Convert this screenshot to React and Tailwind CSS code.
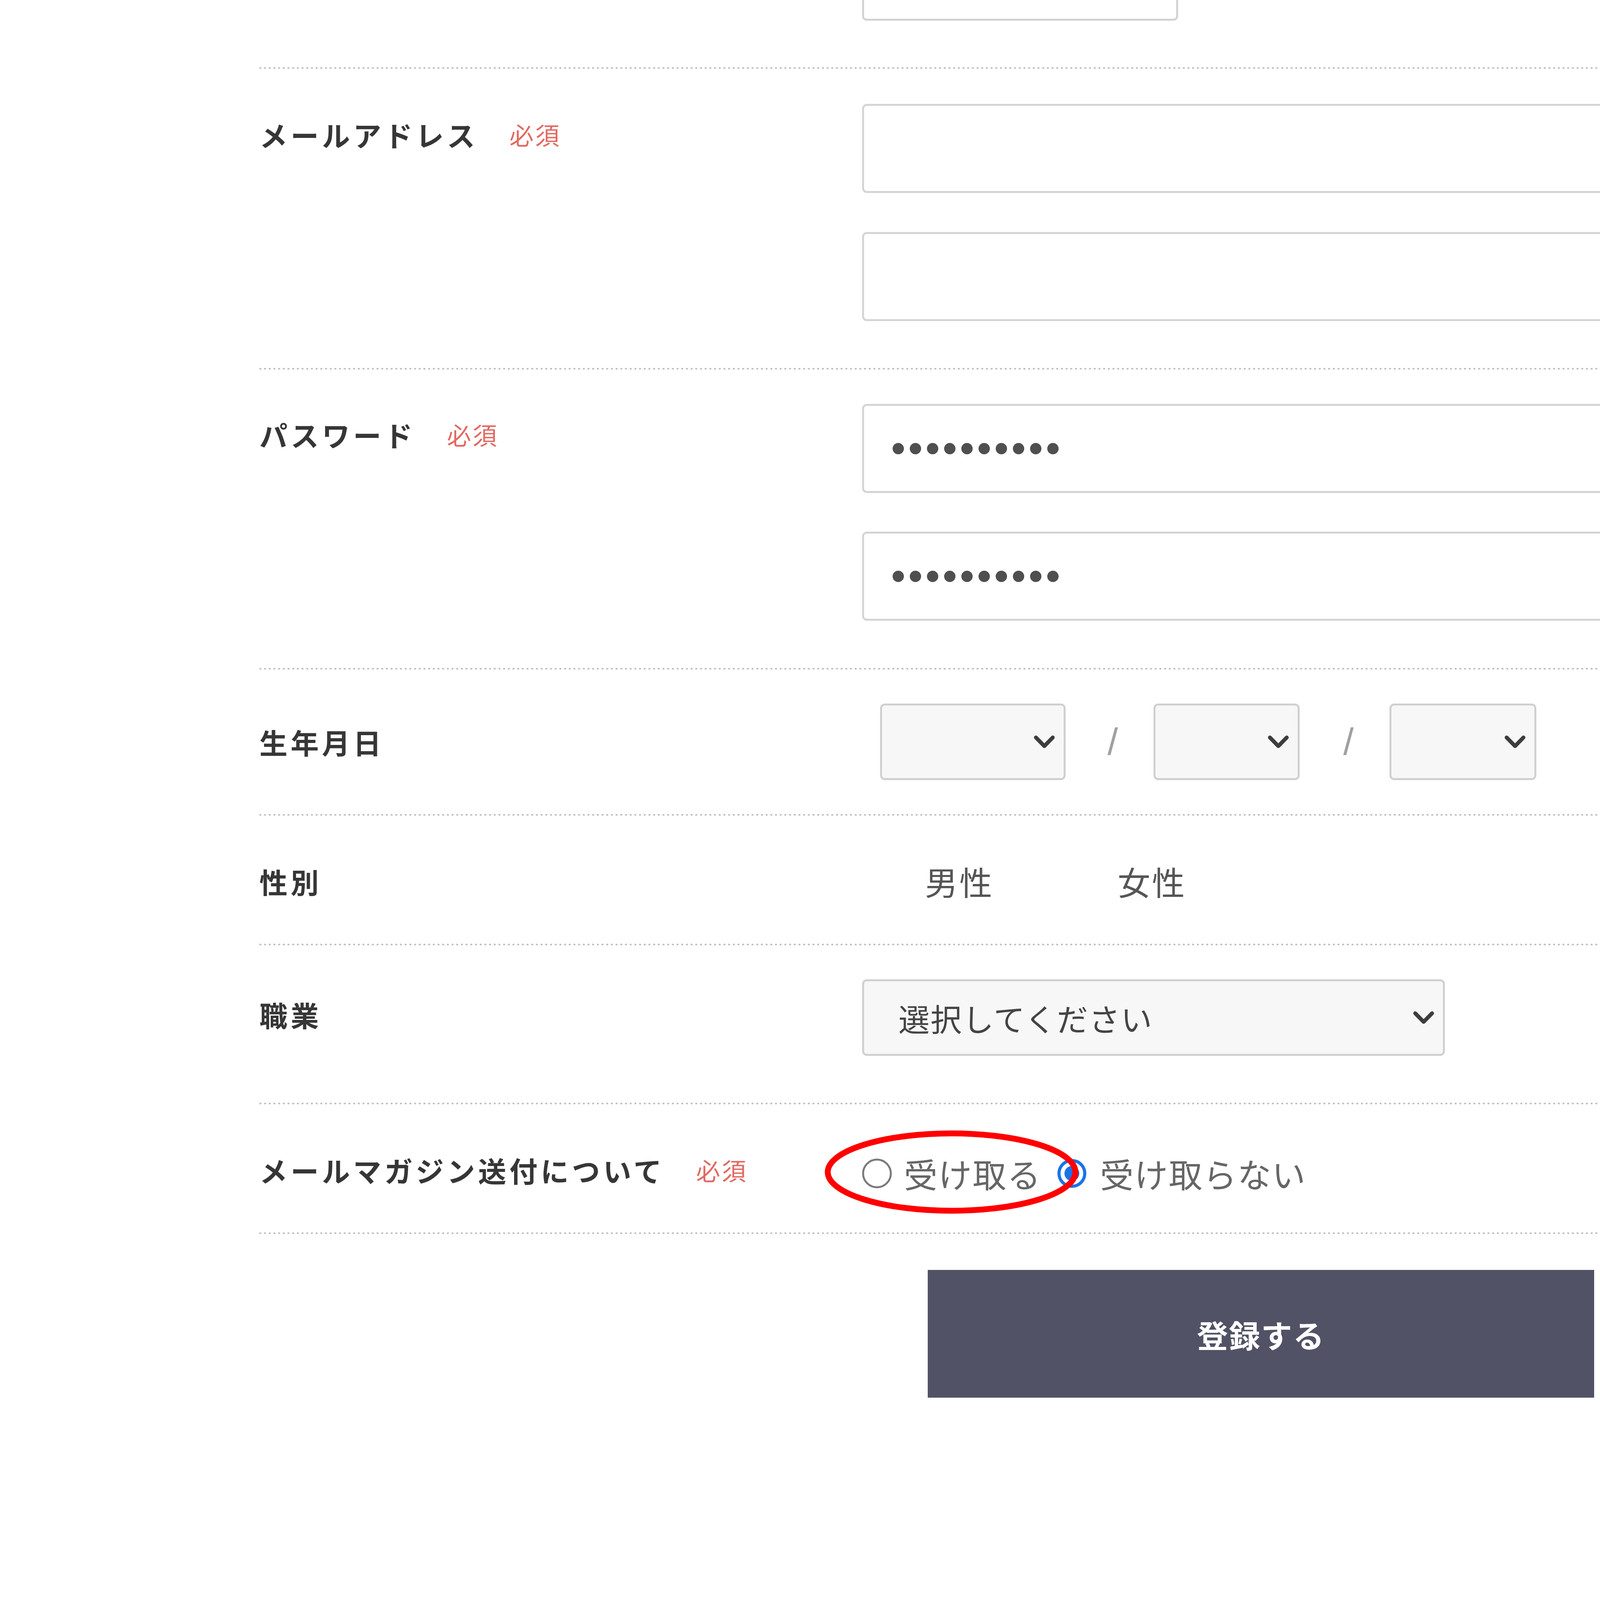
const FONT = "font-['Noto_Sans_CJK_JP','Noto_Sans',sans-serif]";

function Dots() {
  return (
    <div className="h-[4px] w-full bg-[linear-gradient(to_right,#c2c2c2_5px,transparent_5px)] bg-[length:12px_4px] bg-repeat-x" />
  );
}

function Label({ text, required, className = "" }) {
  return (
    <div className={`w-[1543px] shrink-0 ${className}`}>
      <div className="flex items-center">
        <span className="text-[72px] leading-none font-bold tracking-[8px] text-[#363636]">
          {text}
        </span>
        {required && (
          <span className="ml-[80px] text-[62px] leading-none tracking-[4px] text-[#e26a62]">
            必須
          </span>
        )}
      </div>
    </div>
  );
}

function TextBox({ children, className = "" }) {
  return (
    <div
      className={`flex h-[228px] w-full items-center rounded-[12px] border-[5px] border-[#d4d4d4] bg-white ${className}`}
    >
      {children}
    </div>
  );
}

function PasswordDots() {
  return (
    <div className="ml-[73px] flex gap-[15px]">
      {Array.from({ length: 10 }).map((_, i) => (
        <span key={i} className="h-[29px] w-[29px] rounded-full bg-[#4f4f4f]" />
      ))}
    </div>
  );
}

function Chevron() {
  return (
    <svg width="55" height="34" viewBox="0 0 55 34" fill="none">
      <polyline
        points="6,6 27.5,28 49,6"
        stroke="#3d3d3d"
        strokeWidth="10"
        strokeLinecap="round"
        strokeLinejoin="round"
      />
    </svg>
  );
}

function SelectBox({ width, children }) {
  return (
    <div
      className={`flex h-[196px] ${width} shrink-0 items-center justify-between rounded-[12px] border-[5px] border-[#d0d0d0] bg-[#f7f7f7] pr-[22px]`}
    >
      <div>{children}</div>
      <Chevron />
    </div>
  );
}

function Radio({ checked }) {
  if (checked) {
    return (
      <span className="flex h-[74px] w-[74px] shrink-0 items-center justify-center rounded-full border-[8px] border-[#1a73e8] bg-white">
        <span className="h-[38px] w-[38px] rounded-full bg-[#1a73e8]" />
      </span>
    );
  }
  return (
    <span className="h-[76px] w-[76px] shrink-0 rounded-full border-[5px] border-[#7a7a7a] bg-white" />
  );
}

export default function App() {
  return (
    <div className={`min-h-screen w-full overflow-hidden bg-white ${FONT}`}>
      <div className="ml-[664px] w-[5128px]">
        {/* previous field (cut off) */}
        <div className="flex h-[172px]">
          <div className="w-[1543px] shrink-0" />
          <div className="h-[53px] w-[809px] rounded-b-[12px] border-x-[5px] border-b-[5px] border-[#d2d2d2] bg-white" />
        </div>
        <Dots />

        {/* email */}
        <div className="flex h-[766px]">
          <Label text="メールアドレス" required className="pt-[132px]" />
          <div className="flex-1 pt-[90px]">
            <TextBox />
            <TextBox className="mt-[100px]" />
          </div>
        </div>
        <Dots />

        {/* password */}
        <div className="flex h-[764px]">
          <Label text="パスワード" required className="pt-[130px]" />
          <div className="flex-1 pt-[88px]">
            <TextBox>
              <PasswordDots />
            </TextBox>
            <TextBox className="mt-[99px]">
              <PasswordDots />
            </TextBox>
          </div>
        </div>
        <Dots />

        {/* birthday */}
        <div className="flex h-[370px] items-center">
          <Label text="生年月日" />
          <div className="flex flex-1 items-center pl-[46px]">
            <SelectBox width="w-[475px]" />
            <span className="w-[225px] pl-[16px] text-center font-['Liberation_Sans',sans-serif] text-[96px] leading-none text-[#a0a0a0]">
              /
            </span>
            <SelectBox width="w-[374px]" />
            <span className="w-[230px] pl-[20px] text-center font-['Liberation_Sans',sans-serif] text-[96px] leading-none text-[#a0a0a0]">
              /
            </span>
            <SelectBox width="w-[376px]" />
          </div>
        </div>
        <Dots />

        {/* gender */}
        <div className="flex h-[328px]">
          <Label text="性別" className="pt-[132px]" />
          <div className="flex flex-1 pl-[161px] pt-[126px] text-[84px] leading-none tracking-[4px] text-[#555555]">
            <span>男性</span>
            <span className="ml-[317px]">女性</span>
          </div>
        </div>
        <Dots />

        {/* occupation */}
        <div className="flex h-[403px]">
          <Label text="職業" className="pt-[141px]" />
          <div className="flex-1 pt-[87px]">
            <SelectBox width="w-[1492px]">
              <span className="ml-[88px] text-[80px] leading-none tracking-[2px] text-[#444444]">
                選択してください
              </span>
            </SelectBox>
          </div>
        </div>
        <Dots />

        {/* mail magazine */}
        <div className="flex h-[328px]">
          <Label text="メールマガジン送付について" required className="pt-[132px]" />
          <div className="relative flex-1 pt-[127px]">
            <div className="flex h-[100px] items-center text-[86px] leading-none tracking-[2px] text-[#666666]">
              <Radio />
              <span className="ml-[31px]">受け取る</span>
              <span className="ml-[41px]">
                <Radio checked />
              </span>
              <span className="ml-[35px]">受け取らない</span>
            </div>
            {/* annotation */}
            <svg
              className="absolute left-[-96px] top-[66px]"
              width="650"
              height="215"
              viewBox="0 0 650 215"
              fill="none"
            >
              <ellipse cx="325" cy="107.5" rx="317" ry="99" stroke="#ff0000" strokeWidth="15" />
            </svg>
          </div>
        </div>
        <Dots />

        {/* submit */}
        <div className="mt-[92px] flex justify-center">
          <button className="flex h-[327px] w-[1706px] items-center justify-center bg-[#525266] text-[80px] font-bold leading-none tracking-[2px] text-white">
            登録する
          </button>
        </div>
      </div>
    </div>
  );
}
